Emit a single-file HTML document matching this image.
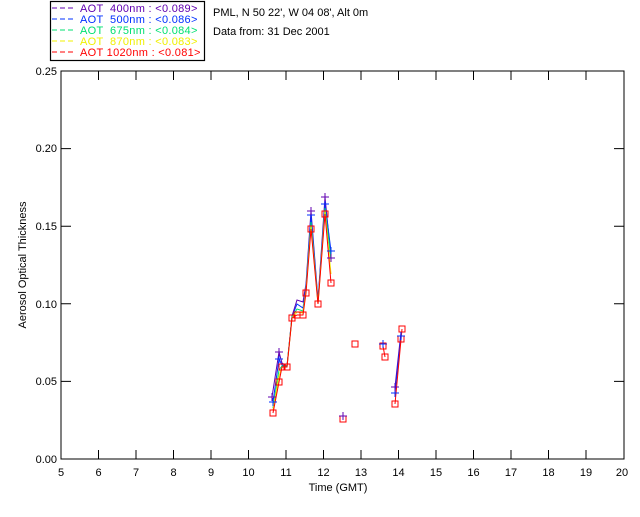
<!DOCTYPE html>
<html><head><meta charset="utf-8"><style>
body{margin:0;background:#fff;width:640px;height:512px;overflow:hidden}
svg text{font-family:"Liberation Sans",sans-serif;font-size:11px;white-space:pre}
</style></head><body>
<svg width="640" height="512" viewBox="0 0 640 512" xmlns="http://www.w3.org/2000/svg" xml:space="preserve">
<rect x="50.5" y="1.5" width="154" height="59" fill="#fff" stroke="#000" stroke-width="1.2"/>
<g font-size="11" letter-spacing="0.3">
<line x1="52" y1="8" x2="73" y2="8" stroke="#6000b0" stroke-dasharray="5,3"/><text x="80" y="12" fill="#6000b0">AOT  400nm : &lt;0.089&gt;</text>
<line x1="52" y1="19" x2="73" y2="19" stroke="#0030ff" stroke-dasharray="5,3"/><text x="80" y="23" fill="#0030ff">AOT  500nm : &lt;0.086&gt;</text>
<line x1="52" y1="30" x2="73" y2="30" stroke="#00e070" stroke-dasharray="5,3"/><text x="80" y="34" fill="#00e070">AOT  675nm : &lt;0.084&gt;</text>
<line x1="52" y1="41" x2="73" y2="41" stroke="#f0f000" stroke-dasharray="5,3"/><text x="80" y="45" fill="#f0f000">AOT  870nm : &lt;0.083&gt;</text>
<line x1="52" y1="52" x2="73" y2="52" stroke="#ff0000" stroke-dasharray="5,3"/><text x="80" y="56" fill="#ff0000">AOT 1020nm : &lt;0.081&gt;</text>
</g>
<text x="213" y="16">PML, N 50 22', W 04 08', Alt 0m</text>
<text x="213" y="35">Data from: 31 Dec 2001</text>
<rect x="61" y="71" width="563" height="388" fill="none" stroke="#000"/>
<g stroke="#000">
<path d="M98.5 459v-9M136 459v-9M173.5 459v-9M211 459v-9M248.5 459v-9M286 459v-9M323.5 459v-9M361 459v-9M398.5 459v-9M436 459v-9M473.5 459v-9M511 459v-9M548.5 459v-9M586 459v-9"/>
<path d="M98.5 71v9M136 71v9M173.5 71v9M211 71v9M248.5 71v9M286 71v9M323.5 71v9M361 71v9M398.5 71v9M436 71v9M473.5 71v9M511 71v9M548.5 71v9M586 71v9"/>
<path d="M61 381.4h10M61 303.8h10M61 226.2h10M61 148.6h10M624 381.4h-10M624 303.8h-10M624 226.2h-10M624 148.6h-10"/>
</g>
<g text-anchor="end" font-size="10">
<text x="57" y="463">0.00</text><text x="57" y="385">0.05</text><text x="57" y="308">0.10</text><text x="57" y="230">0.15</text><text x="57" y="152">0.20</text><text x="57" y="75">0.25</text>
</g>
<g text-anchor="middle" font-size="10">
<text x="61" y="476">5</text><text x="98.5" y="476">6</text><text x="136" y="476">7</text><text x="173.5" y="476">8</text><text x="211" y="476">9</text><text x="248.5" y="476">10</text><text x="286" y="476">11</text><text x="323.5" y="476">12</text><text x="361" y="476">13</text><text x="398.5" y="476">14</text><text x="436" y="476">15</text><text x="473.5" y="476">16</text><text x="511" y="476">17</text><text x="548.5" y="476">18</text><text x="586" y="476">19</text><text x="622" y="476">20</text>
<text x="338" y="491">Time (GMT)</text>
<text transform="translate(26,265) rotate(-90)">Aerosol Optical Thickness</text>
</g>
<g fill="none" stroke-width="1">
<polyline stroke="#6000b0" points="272,397 279,352 282,363 287,366 292,316 297,300 303,302 306,284 311,211 318,300 325,197 331,258"/>
<polyline stroke="#0030ff" points="273,402 279,359 282,365 287,366 292,317 297,304 303,308 306,288 311,215 318,302 325,204 331,251"/>
<polyline stroke="#00e070" points="273,408 279,370 282,366 287,366 292,317 297,309 303,311 306,290 311,222 318,303 325,208 331,260"/>
<polyline stroke="#f0f000" points="273,410 279,376 282,367 287,367 292,318 297,312 303,313 306,291 311,226 318,304 325,211 331,274"/>
<polyline stroke="#ff0000" points="273,413 279,382 282,367 287,367 292,318 297,315 303,315 306,293 311,229 318,304 325,214 331,283"/>
<polyline stroke="#6000b0" points="395,387 401,332"/>
<polyline stroke="#0030ff" points="395,393 401,336"/>
<polyline stroke="#ff0000" points="395,404 402,329"/>
<polyline stroke="#ff0000" points="383,346 385,357"/>
</g>
<g fill="none" stroke="#ff0000">
<path d="M270 410h6v6h-6zM276 379h6v6h-6zM279 364h6v6h-6zM284 364h6v6h-6zM289 315h6v6h-6zM294 312h6v6h-6zM300 312h6v6h-6zM303 290h6v6h-6zM308 226h6v6h-6zM315 301h6v6h-6zM322 211h6v6h-6zM328 280h6v6h-6zM340 416h6v6h-6zM352 341h6v6h-6zM380 343h6v6h-6zM382 354h6v6h-6zM392 401h6v6h-6zM398 336h6v6h-6zM399 326h6v6h-6z"/>
</g>
<g stroke="#0030ff">
<path d="M273 398v8M269 402h8M279 355v8M275 359h8M311 211v8M307 215h8M325 200v8M321 204h8M331 247v8M327 251h8M395 389v8M391 393h8M401 332v8M397 336h8M383 340v8M379 344h8"/>
</g>
<g stroke="#6000b0">
<path d="M272 393v8M268 397h8M279 348v8M275 352h8M311 207v8M307 211h8M325 193v8M321 197h8M331 254v8M327 258h8M395 383v8M391 387h8M343 412v8M339 416h8"/>
</g>
</svg>
</body></html>
